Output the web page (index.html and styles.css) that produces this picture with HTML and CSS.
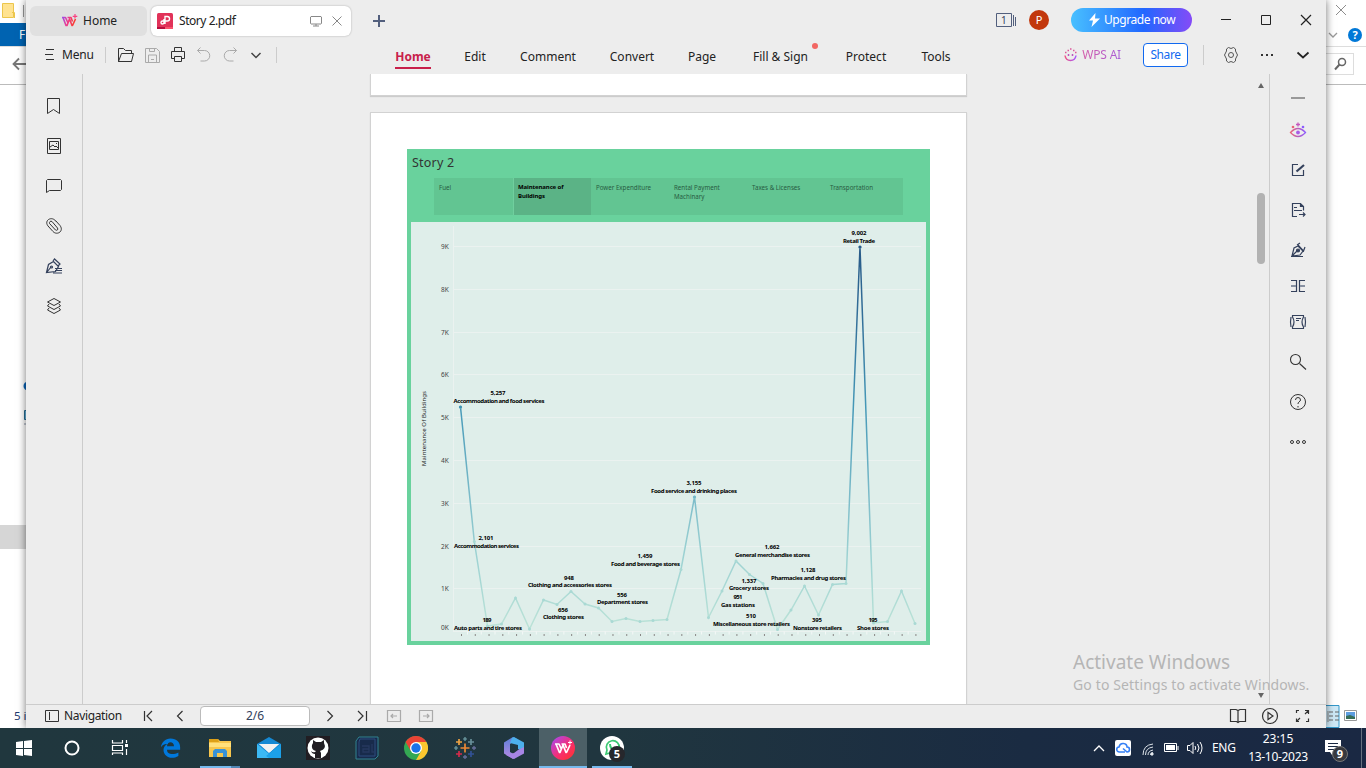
FILE: index.html
```html
<!DOCTYPE html>
<html lang="en">
<head>
<meta charset="utf-8">
<title>Story 2.pdf</title>
<link rel="stylesheet" href="styles.css">
</head>
<body>
<div class="desktop">
  <section class="explorer">
    <div class="ex-title">
      <svg width="24" height="23" fill="none"><path d="M2.500 3.500h11v14h-11z" fill="#ffe391" stroke="#ecc64c"/><path d="M12 12.500h2.500v5.500" stroke="#ecc64c"/><path d="M23.500 5v12" stroke="#999"/></svg>
      <svg width="50" height="23" fill="none" stroke="#8d8d8d"><path d="M20 5l10 10M30 5L20 15"/></svg>
    </div>
    <div class="ex-ribbon"><span class="ex-file">File</span><span class="ex-help"><svg width="14" height="22" fill="none" stroke="#999" stroke-width="1.300"><path d="M3 9l4 4 4-4"/></svg><b>?</b></span></div>
    <div class="ex-address">
      <svg width="30" height="37" fill="none" stroke="#777" stroke-width="1.800"><path d="M13.500 17H28M19 11.500l-5.500 5.500L19 22.500"/></svg>
      <div class="ex-search"><svg width="20" height="20" fill="none" stroke="#666" stroke-width="1.500"><circle cx="12" cy="8" r="3.500"/><path d="M9.500 10.500L5 15.500" stroke-width="2"/></svg></div>
    </div>
    <div class="ex-list">
      <svg width="26" height="619"><circle cx="28" cy="301" r="4.500" fill="#0a64b8"/><path d="M24.500 325.500h4v9h-4z" fill="#69b5df" stroke="#286f94"/><path d="M24 339h3" stroke="#8794a8"/><path d="M0 440h26v24H0z" fill="#d6d6d6"/></svg>
    </div>
    <div class="ex-status"><span>5 items</span><svg width="40" height="24"><path d="M-10 1.500h23v22h-23z" fill="#cde8f6" stroke="#3297c9"/><path d="M2 7v11" stroke="#888"/><path d="M3 8h10M3 12h10M3 16h10" stroke="#666" stroke-dasharray="4 2"/><path d="M18.500 6.500h12v10h-12z" fill="#fff" stroke="#999"/><path d="M20 8h9v7h-9z" fill="#5c9de0"/><path d="M20 12l4-1 5 2v2h-9z" fill="#376e58"/></svg></div>
  </section>

  <main class="wps">
    <header class="tabbar">
      <div class="tab home-tab"><svg width="17" height="16" viewBox="0 0 17 16" fill="none"><defs><linearGradient id="w" gradientUnits="userSpaceOnUse" x1="1" y1="0" x2="15" y2="4"><stop stop-color="#8651ff"/><stop offset=".5" stop-color="#ee3b91"/><stop offset="1" stop-color="#fa3c30"/></linearGradient></defs><path d="M1 4.500h3.500L7 10M2 4.500L5 12.500h1L8.500 6l2.500 6.500h.500L14.500 6M6.500 4.500H10l1.500 4" stroke="url(#w)" stroke-width="1.600" stroke-linejoin="round"/><path d="M14 1v4.500M11.700 3.300h4.600" stroke="#f84383" stroke-width="1.200"/></svg><span>Home</span></div>
      <div class="tab doc-tab"><svg width="16" height="16" fill="none"><rect width="16" height="16" rx="1.500" fill="#e13259"/><path d="M0 14h8v2H0z" fill="#b60d3d"/><path d="M8 14h8v2H8z" fill="#fa536c"/><path d="M8 11V3.500h2.300a2.200 2.200 0 0 1 0 4.500H5.500a1.500 1.500 0 1 0 1.500 1.500V6" stroke="#fff" stroke-width="1.400"/></svg><span class="t-doc">Story 2.pdf</span><svg class="screen-ic" width="12" height="11" fill="none" stroke="#888"><path d="M1 .500h10l.500.500v6.500l-.500.500H1L.500 7.500V1zM3 10h6M6 8v2"/></svg><svg width="10" height="10" fill="none" stroke="#888"><path d="M.500.500l9 9M9.500.500l-9 9"/></svg></div>
      <svg class="plus" width="24" height="24" stroke="#525f7d" stroke-width="2"><path d="M12 6v12M6 12h12"/></svg>
      <div class="win-tools">
        <svg class="count" width="21" height="14" fill="none" stroke="#525f7d"><path d="M.500.500h15v13H.500zM17.500 2v11M19.500 4v9"/><text x="5" y="11" class="count-text">1</text></svg>
        <span class="avatar">P</span>
        <span class="upgrade"><svg width="12" height="14"><path d="M7.500 0L1 7.500h4L3.500 14 12 5.500H7z" fill="#fff"/></svg><span class="t-up">Upgrade now</span></span>
        <svg width="40" height="40" fill="none" stroke="#222"><path d="M15 19.500h10"/></svg><svg width="40" height="40" fill="none" stroke="#222"><path d="M15.500 15.500h9v9h-9z"/></svg><svg width="40" height="40" fill="none" stroke="#222" stroke-width="1.200"><path d="M15 15l10 10M25 15L15 25"/></svg>
      </div>
    </header>

    <div class="toolbar">
      <svg width="10" height="12" stroke="#333"><path d="M1 .500h8M0 5.500h8M1 10.500h8"/></svg><span class="t-menu">Menu</span><i class="sep"></i>
      <div class="quick">
        <svg viewBox="0 0 26 26" stroke="#333"><path d="M5.500 19.500v-13h5l2 2h6v3M5.500 19.500l3-8h12l-2 8zM5.500 19.500h13"/></svg>
        <svg viewBox="0 0 26 26" stroke="#aaa"><path d="M6.500 6.500h11l3 3v11h-14zM9.500 20v-7h8v7M10.500 6.500v3h5v-3M12 17.500h3"/></svg>
        <svg viewBox="0 0 26 26" stroke="#333"><path d="M9.500 9.500v-4h7v4M9.500 16.500h-3v-7h13v7h-3M9.500 14.500h7v5h-7z"/></svg>
        <svg viewBox="0 0 26 26" stroke="#aaa"><path d="M9.500 5.500L6.500 8.500l3 3M6.500 8.500h7a5 5 0 0 1 0 10.500h-4"/></svg>
        <svg viewBox="0 0 26 26" stroke="#aaa"><path d="M16.500 5.500l3 3-3 3M19.500 8.500h-7a5 5 0 0 0 0 10.500h4"/></svg>
        <svg viewBox="0 0 26 26" stroke="#444" stroke-width="1.500"><path d="M8.500 11l4.500 4.500 4.500-4.500"/></svg>
      </div><i class="sep"></i>
      <nav class="menu"><b>Home</b><span>Edit</span><span>Comment</span><span>Convert</span><span>Page</span><span class="new">Fill &amp; Sign</span><span>Protect</span><span>Tools</span></nav>
      <div class="tool-right">
        <svg width="13" height="14" fill="none" stroke-width="1.500"><defs><linearGradient id="ai"><stop stop-color="#ef5583"/><stop offset="1" stop-color="#a658ff"/></linearGradient></defs><path d="M1 7.500c1 6.500 10 6.500 11 0" stroke="url(#ai)"/><path d="M1 4.500h1.500M3.500 2.500H5M6 1h1.500M9 2.500h1.500M11 4.500h1.500" stroke="#dc579a"/><path d="M4.500 6v2M8.500 6v2" stroke="#ba55bd"/></svg><span class="wps-ai">WPS AI</span><span class="share">Share</span><i class="sep"></i>
        <svg class="r-ic" viewBox="0 0 36 30" stroke="#555"><path d="M13.500 9l2-1.500 2.500 1 2.500-1 2 1.500v2l2 4-2 4v2l-2 1.500-2.500-1-2.500 1-2-1.500v-2l-2-4 2-4z"/><circle cx="18" cy="15" r="2.500"/></svg><svg class="r-ic" viewBox="0 0 36 30"><path d="M12 14h2v2h-2zM17 14h2v2h-2zM22 14h2v2h-2z" fill="#333"/></svg><svg class="r-ic" viewBox="0 0 36 30" stroke="#222" stroke-width="1.700"><path d="M12.500 12.500l5.500 5 5.500-5"/></svg>
      </div>
    </div>

    <div class="body">
      <aside class="left-rail">
        <svg viewBox="0 0 20 20"><path d="M3.500 2.500h12v15l-6-4-6 4z"/></svg>
        <svg viewBox="0 0 20 20"><path d="M3.500 2.500h13v15h-13zM5.500 5.500h9v8h-9zM6 11l3-2 2 2 1-1 2 2"/><path d="M12 7.500h1"/></svg>
        <svg viewBox="0 0 20 20"><path d="M2.500 16.500v-12l1-1h13l1 1v9l-1 1H5.500z"/></svg>
        <svg viewBox="0 0 20 20"><path d="M12 5.500C10 2.500 7 2 4.500 3.500 2 5.500 2.500 8 4 10l5 5.500c2 2.200 5 2.200 7 .500 2-2 1.500-4.500 0-6.500l-4.500-5M5.500 7.500l6 6.500c1.500 1 3-.500 2-2L8 5.500M5.500 7.500C5 6 6.500 4.500 8 5.500"/></svg>
        <svg viewBox="0 0 20 20" class="navy"><path d="M2.500 16.500l2-8 5-3 5 5-3 5zM9 5l1.500-2 5.500 5-2 2M3 16l4-5M11 12.500h7M11 14.500h7M9 17h9"/><circle cx="7.500" cy="11" r="1"/></svg>
        <svg viewBox="0 0 20 20"><path d="M10 2.500L16.500 6 10 9.500 3.500 6zM5 8l-1.500 2L10 13.500 16.500 10 15 8M5 12l-1.500 2L10 17.500 16.500 14 15 12"/></svg>
      </aside>
      <section class="canvas">
        <div class="pages">
          <article class="page page-prev"></article>
          <article class="page">
            <div class="story">
              <h1>Story 2</h1>
              <div class="points"><span>Fuel</span><b>Maintenance of<br>Buildings</b><span>Power Expenditure</span><span>Rental Payment<br>Machinary</span><span>Taxes &amp; Licenses</span><span>Transportation</span></div>
              <svg class="chart" viewBox="411 222 515 419" width="515" height="419">
                <defs><linearGradient id="depth" gradientUnits="userSpaceOnUse" x1="0" y1="247" x2="0" y2="630"><stop stop-color="#285a88"/><stop offset=".2" stop-color="#34719b"/><stop offset=".42" stop-color="#4699b8"/><stop offset=".65" stop-color="#7bbbc9"/><stop offset=".8" stop-color="#9bd1d2"/><stop offset="1" stop-color="#bce3d7"/></linearGradient>
                <marker id="dot" markerWidth="4" markerHeight="4" refX="2" refY="2" markerUnits="userSpaceOnUse"><circle cx="2" cy="2" r="1.500" fill="#a9d9d4"/></marker></defs>
                <path class="grid" d="M454 246.500h467M454 289.500h467M454 332.500h467M454 374.500h467M454 417.500h467M454 460.500h467M454 503.500h467M454 546.500h467M454 588.500h467M453.500 226v406M454 631.500h467"/>
                <path class="ticks" d="M467 633h454"/><path class="marks" d="M461 635h456"/>
                <g class="axis"><text x="441" y="249">9K</text><text x="441" y="292">8K</text><text x="441" y="335">7K</text><text x="441" y="377">6K</text><text x="441" y="420">5K</text><text x="441" y="463">4K</text><text x="441" y="506">3K</text><text x="441" y="549">2K</text><text x="441" y="591">1K</text><text x="441" y="630">0K</text></g>
                <text class="axis-title" transform="translate(426 466) rotate(-90)" textLength="75">Maintenance Of Buildings</text>
                <polyline class="line" points="460.500,407 474.300,541.500 487.500,626 501.500,624 515.500,598 529.500,629 543.500,600 557,604.500 571,591.500 585,604 598.500,608 612,621.500 626,618.500 640,621.500 653,620.500 667,619.500 681,569.500 694.500,497 708.500,617.500 722,591 736,561 749.500,574.500 763,583.500 777.500,629.500 791,610 804.500,586 818.500,615 832.500,584.500 846,583.500 860,247 873.500,623 887.500,621.500 901.500,591 915,623.500"/>
                <circle cx="460.500" cy="407" r="1.600" fill="#3e92b4"/><circle cx="860" cy="247" r="1.600" fill="#285a88"/><circle cx="694.500" cy="497" r="1.600" fill="#72b8c8"/>
                <g class="labels">
                  <text x="498" y="395" textLength="15">5,257</text><text x="499" y="403" textLength="91">Accommodation and food services</text>
                  <text x="486" y="540" textLength="15">2,101</text><text x="486.500" y="548" textLength="65">Accommodation services</text>
                  <text x="487" y="622" textLength="9">189</text><text x="488" y="630" textLength="68">Auto parts and tire stores</text>
                  <text x="569" y="580" textLength="10">948</text><text x="570" y="587" textLength="84">Clothing and accessories stores</text>
                  <text x="563" y="612" textLength="10">656</text><text x="563.500" y="619" textLength="41">Clothing stores</text>
                  <text x="622" y="597" textLength="10">556</text><text x="622.500" y="604" textLength="51">Department stores</text>
                  <text x="645" y="558" textLength="15">1,459</text><text x="645.500" y="566" textLength="69">Food and beverage stores</text>
                  <text x="694" y="485" textLength="15">3,155</text><text x="694" y="493" textLength="86">Food service and drinking places</text>
                  <text x="772" y="549" textLength="15">1,662</text><text x="772.500" y="557" textLength="75">General merchandise stores</text>
                  <text x="749" y="583" textLength="15">1,337</text><text x="749" y="590" textLength="40">Grocery stores</text>
                  <text x="738" y="599" textLength="9">951</text><text x="738" y="607" textLength="34">Gas stations</text>
                  <text x="808" y="572" textLength="15">1,128</text><text x="808.500" y="580" textLength="75">Pharmacies and drug stores</text>
                  <text x="751" y="618" textLength="10">510</text><text x="751.500" y="626" textLength="77">Miscellaneous store retailers</text>
                  <text x="817" y="622" textLength="10">395</text><text x="817.500" y="630" textLength="49">Nonstore retailers</text>
                  <text x="873" y="622" textLength="9">195</text><text x="873" y="630" textLength="32">Shoe stores</text>
                  <text x="859" y="235" textLength="15">9,002</text><text x="859" y="243" textLength="32">Retail Trade</text>
                </g>
              </svg>
            </div>
          </article>
        </div>
        <div class="scroll"><svg width="8" height="6"><path d="M4 0l3 5H1z" fill="#666"/></svg><i></i><svg class="down" width="8" height="6"><path d="M4 5l3-5H1z" fill="#666"/></svg></div>
      </section>
      <aside class="right-rail">
        <svg class="dash" viewBox="0 0 20 20"><path d="M3 10h14" stroke="#999" stroke-width="2"/></svg>
        <svg viewBox="0 0 20 20" stroke-width="1.300"><defs><linearGradient id="eye"><stop stop-color="#e96377"/><stop offset="1" stop-color="#8c5bff"/></linearGradient></defs><path d="M2.500 12.500q7.500-8 15 0-7.500 8-15 0z" stroke="url(#eye)"/><circle cx="10" cy="12.500" r="1.900" fill="#a95be5" stroke="none"/><path d="M10 2.500v4M8 4.500h4" stroke="#c557bd"/><circle cx="5" cy="7" r="1.300" fill="#e96377" stroke="none"/><circle cx="15" cy="7" r="1.300" fill="#8c5bff" stroke="none"/></svg>
        <svg viewBox="0 0 20 20" class="navy"><path d="M10 4.500H4.500v11h11V10"/><path d="M8.500 11.500l7.500-6.500" stroke-width="2.200"/></svg>
        <svg viewBox="0 0 20 20" class="navy"><path d="M9 16.500H4.500v-13h8l3 3v4M12.500 3.500v3h3M6 7.500h3M6 10.500h8M11 14.500h6M15 12.500l2 2-2 2"/></svg>
        <svg viewBox="0 0 20 20" class="navy"><path d="M4 16l2-8 4-2 5 5-3 4zM4 16l5-5M9 5l3-2M10 5l5.500 6 1.500-4M3 16.500h12"/><circle cx="10" cy="10.500" r="1.500" fill="#34415c"/></svg>
        <svg viewBox="0 0 20 20" class="navy"><path d="M3 4.500h5.500v11H3M17 4.500h-5.500v11H17"/><path d="M3 10h5M12 10h5" stroke="#8790a1" stroke-width="2"/></svg>
        <svg viewBox="0 0 20 20" class="navy"><path d="M4 3.500h12M4 16.500h12M4.500 3.500v1.500q3 5 0 10v1.500M15.500 3.500v1.500q-3 5 0 10v1.500M8 6.500h5M8 8.500h3M3 5q-1 5 0 10M17 5q1 5 0 10"/></svg>
        <svg viewBox="0 0 20 20" stroke-width="1.100"><circle cx="7.500" cy="7.500" r="5"/><path d="M11.500 11.500l6.500 6"/></svg>
        <svg viewBox="0 0 20 20"><circle cx="10" cy="10" r="7.500"/><path d="M7.500 8q0-2.500 2.500-2.500T12.500 8q0 1-1.500 2-1 .5-1 2M10 14v1.500"/></svg>
        <svg viewBox="0 0 20 20"><circle cx="4" cy="10" r="1.500"/><circle cx="10" cy="10" r="1.500"/><circle cx="16" cy="10" r="1.500"/></svg>
      </aside>
    </div>

    <footer class="status">
      <svg width="14" height="12" fill="none" stroke="#333"><path d="M.500.500h13v11H.500zM4.500 2v8"/></svg><span class="t-nav">Navigation</span>
      <svg class="pg" viewBox="0 0 32 22"><path d="M12.500 6v10M20 6l-5 5 5 5"/></svg><svg class="pg" viewBox="0 0 32 22"><path d="M18.500 6l-5 5 5 5"/></svg>
      <span class="page-no">2/6</span>
      <svg class="pg next" viewBox="0 0 32 22"><path d="M13.500 6l5 5-5 5"/></svg><svg class="pg" viewBox="0 0 32 22"><path d="M12 6l5 5-5 5M20.500 6v10"/></svg><svg class="pg dim" viewBox="0 0 32 22"><path d="M9.500 5.500h13v11h-13zM13 11h6M15 9l-2 2 2 2"/></svg><svg class="pg dim" viewBox="0 0 32 22"><path d="M9.500 5.500h13v11h-13zM13 11h6M17 9l2 2-2 2"/></svg>
      <div class="views"><svg class="pg" viewBox="0 0 32 22"><path d="M8.500 4.500H14l2 1 2-1h5.500v12h-6l-1.500 1-1.500-1h-6zM16 5v12"/></svg><svg class="pg" viewBox="0 0 32 22"><circle cx="16" cy="11" r="7.500"/><path d="M14 7.500v7l5-3.500z"/></svg><svg class="pg" viewBox="0 0 32 22"><path d="M10.500 8V5.500H13M19 5.500h3.500V9M22.500 13.500v3H20M13 16.500h-2.500v-3M19 9l3-3M11 16l3-3"/></svg></div>
    </footer>
  </main>
  <div class="activate"><p>Activate Windows</p><span>Go to Settings to activate Windows.</span></div>
</div>

<footer class="taskbar">
  <div class="apps">
    <div class="app sys"><svg viewBox="0 0 24 24"><path d="M4 6l7-1v7H4zM12 5l8-1v8h-8zM4 13h7v7l-7-1zM12 13h8v7l-8-1z" fill="#fff"/></svg></div>
    <div class="app sys"><svg viewBox="0 0 24 24"><circle cx="12" cy="12" r="6.500" fill="none" stroke="#fff" stroke-width="2"/></svg></div>
    <div class="app sys"><svg viewBox="0 0 24 24" fill="none" stroke="#fff" stroke-width="1.200"><path d="M4.500 4v3h10V4M4.500 19v-2h10v2M4.500 9.500h10v5h-10zM18.500 4v3M18.500 13v6"/><path d="M17 8h3v3h-3z" fill="#fff" stroke="none"/></svg></div>
    <div class="app edge"><svg viewBox="0 0 24 24"><path d="M1 11C2 5 6 1 12 1c7 0 11 4 11 10v3H8c0 6 8 6 13 3v4C13 26 4 22 4 14c0-3 2-6 5-7-3 0-6 1-8 4zm7-1h8c0-6-8-6-8 0z" fill="#0078dc"/></svg></div>
    <div class="app open folder"><svg viewBox="0 0 24 24"><path d="M1 3h9l2 2h11v16H1z" fill="#f7c64d"/><path d="M1 3h9l1 3H1z" fill="#dda017"/><path d="M1 7h22v4H1z" fill="#ffe07c"/><path d="M5 21v-6l2-2h10l2 2v6h-4v-4H9v4z" fill="#3992d6"/></svg></div>
    <div class="app"><svg viewBox="0 0 24 24"><path d="M0 8l12-7 12 7v14H0z" fill="#1589d4"/><path d="M2 8h20L12 17z" fill="#f4f5f5"/><path d="M0 8l17 14H0z" fill="#3cb9f4"/><path d="M24 8L9 20l3 2h12z" fill="#1ca0e8"/><path d="M2 8h20l-9 8z" fill="#f2f2f2"/></svg></div>
    <div class="app"><svg viewBox="0 0 24 24"><path d="M0 0h24v24H0z" fill="#211d22"/><circle cx="12" cy="12" r="10.500" fill="#fff"/><path d="M9 22v-4q-3 0-4-3 2 2 4 1l1-1q-5-1-4-6l1-2V4l3 2h5l3-2v3q3 6-4 8l1 2v5z" fill="#211d22"/></svg></div>
    <div class="app"><svg viewBox="0 0 24 24" fill="none"><path d="M4 1h19v19l-3 3H1V5z" fill="#182b4b" stroke="#318391"/><path d="M5 3h15v17H4V6z" stroke="#2c4c7e"/><path d="M7 10h7v6H8v-3h6M17 8v8h2" stroke="#26395f" stroke-width="1.300"/></svg></div>
    <div class="app"><svg viewBox="0 0 24 24"><circle cx="12" cy="12" r="12" fill="#34a853"/><path d="M1.600 6A12 12 0 0 1 22.400 6H12l-5.200 9z" fill="#ea4335"/><path d="M22.400 6A12 12 0 0 1 12 24l5.200-9L12 6z" fill="#fbc62f"/><circle cx="12" cy="12" r="6" fill="#fff"/><circle cx="12" cy="12" r="4.700" fill="#1a73e8"/></svg></div>
    <div class="app"><svg viewBox="0 0 24 24" fill="none" stroke-width="1.700"><path d="M12 7.500v9M7.500 12h9" stroke="#ed8734"/><path d="M6 3v6M3 6h6" stroke="#eda244"/><path d="M18 3v6M15 6h6" stroke="#688f99"/><path d="M6 15v6M3 18h6" stroke="#d42b4b"/><path d="M18 15v6M15 18h6" stroke="#325195"/><path d="M12 1v4M10 3h4M1 12h4M3 10v4" stroke="#72a2a9" stroke-width="1.200"/><path d="M12 19v4M10 21h4M19 12h4M21 10v4" stroke="#686f9c" stroke-width="1.300"/></svg></div>
    <div class="app"><svg viewBox="0 0 24 24"><defs><linearGradient id="m" x2="0" y2="1"><stop stop-color="#5b7fd8"/><stop offset="1" stop-color="#b98be5"/></linearGradient></defs><path d="M11 1L2 6.500v11L11 23l4-3-7-4V8l7-5z" fill="url(#m)"/><path d="M10 2l2-1 10 5.500V16l-6-3V9L8 7z" fill="#4db0ec"/><path d="M22 11v6.500L12 23l-8-4 8-2 4-3z" fill="#a785e5"/></svg></div>
    <div class="app open active"><svg viewBox="0 0 24 24" fill="none"><defs><linearGradient id="wp" x2="1" y2="1"><stop stop-color="#a14bff"/><stop offset=".55" stop-color="#f72e72"/><stop offset="1" stop-color="#ff3325"/></linearGradient></defs><circle cx="12" cy="12" r="12" fill="url(#wp)"/><path d="M4 8h4l2.500 5.500M5 8l3.500 8.500h.500L12 9l3 7.500h.500L19 9M10.500 8H14l1.500 4" stroke="#fff" stroke-width="1.700" stroke-linejoin="round"/><path d="M19 4.500v4M17 6.500h4" stroke="#fff"/></svg></div>
    <div class="app open whatsapp"><svg viewBox="0 0 24 24" fill="none"><circle cx="12" cy="12" r="12" fill="#fff"/><path d="M6 18l1-4a6.500 6.500 0 1 1 3 3z" stroke="#3cc873" stroke-width="1.700"/><path d="M10 8q0 5 5 6" stroke="#3cc873" stroke-width="2"/></svg><b class="badge">5</b></div>
  </div>
  <div class="tray">
    <svg width="16" height="16" fill="none" stroke="#fff" stroke-width="1.300"><path d="M3 11l5-5 5 5"/></svg>
    <svg class="cloud" width="16" height="16" fill="none"><rect width="16" height="16" rx="2" fill="#fff"/><path d="M10 12H4.500a2.500 2.500 0 0 1-.5-5q1-4 4.500-3.500Q12 4 12 7a2.500 2.500 0 0 1 0 5L8 8.500" stroke="#3580f5" stroke-width="1.600"/></svg>
    <svg class="wifi" width="16" height="16" fill="none" stroke="#dce2e8"><path d="M3 15q0-10 10-11M5.500 15q0-7 7.500-8M8 15q0-4 5-5M10.500 15q0-2 2.500-2.500"/><circle cx="12" cy="14" r="1.200" fill="#fff"/></svg>
    <svg class="battery" width="15" height="10" fill="none" stroke="#fff"><path d="M.500.500h12v8H.500zM14 3v4"/><path d="M2 2h9v5H2z" fill="#fff" stroke="none"/></svg>
    <svg class="sound" width="18" height="16" fill="none" stroke="#fff"><path d="M1.500 5.500H4l3-3v11l-3-3H1.500zM9 6q1.500 2 0 4M11.500 4q3 4 0 8M14 2q4 6 0 12"/></svg>
    <span class="lang">ENG</span>
    <span class="clock"><span>23:15</span><span class="date">13-10-2023</span></span>
    <span class="notice"><svg width="18" height="18"><path d="M1 1h16v12h-6l-3 3-2-3H1z" fill="#fff"/><path d="M4 4.500h10M4 7.500h10M4 10.500h6" stroke="#1b2a43"/></svg><b class="badge">9</b></span>
    <i></i>
  </div>
</footer>
</body>
</html>
```
FILE: styles.css
```css
* { box-sizing: border-box; }
body { margin: 0; width: 1366px; height: 768px; overflow: hidden; font: 12px/16px "Noto Sans", sans-serif; color: #222; }
svg { display: block; flex: none; overflow: hidden; }
span, b { white-space: nowrap; }
.desktop { position: relative; height: 728px; overflow: hidden; background: #fff; }

/* Explorer window, mostly hidden behind the reader */
.explorer { height: 728px; display: flex; flex-direction: column; }
.ex-title { height: 23px; display: flex; justify-content: space-between; }
.ex-ribbon { height: 24px; display: flex; justify-content: space-between; border-bottom: 1px solid #ddd; }
.ex-file { width: 60px; height: 23px; padding: 4px 0 0 19px; background: #0063b1; color: #fff; }
.ex-help { display: flex; align-items: center; gap: 8px; padding-right: 4px; }
.ex-help b { width: 14px; height: 14px; border-radius: 50%; background: #0078d7; color: #fff; font-size: 11px; line-height: 14px; text-align: center; }
.ex-address { height: 38px; display: flex; justify-content: space-between; border-bottom: 1px solid #bbb; }
.ex-search { width: 120px; height: 22px; margin: 6px 12px 0 0; border: 1px solid #ddd; display: flex; justify-content: flex-end; padding-right: 3px; }
.ex-list { flex: 1; }
.ex-status { height: 24px; display: flex; justify-content: space-between; align-items: center; padding-left: 14px; color: #1e3a70; font-size: 11.500px; }

/* PDF reader window */
.wps { position: absolute; left: 26px; top: 0; width: 1300px; height: 728px; display: flex; flex-direction: column; background: #ededed; box-shadow: 0 0 8px rgba(0,0,0,.55); }
.tabbar { height: 40px; display: flex; align-items: center; padding-left: 4px; }
.tab { height: 30px; margin-top: 2px; border-radius: 6px; display: flex; align-items: center; }
.home-tab { width: 117px; padding-left: 31px; background: #e0e0e0; gap: 5px; }
.doc-tab { width: 200px; margin-left: 4px; padding: 0 9px 0 6px; background: #fff; box-shadow: 0 0 2px rgba(0,0,0,.3); }
.t-doc { margin-left: 6px; letter-spacing: -.45px; }
.screen-ic { margin: 0 10px 0 auto; }
.plus { margin: 1px 0 0 16px; }
.win-tools { margin-left: auto; display: flex; align-items: center; }
.count { margin-right: 12px; }
.count-text { font: 10px "Noto Sans", sans-serif; fill: #34415c; stroke: none; }
.avatar { width: 20px; height: 20px; margin-right: 22px; border-radius: 50%; background: #c2370c; color: #fff; font-size: 11px; line-height: 20px; text-align: center; }
.upgrade { width: 121px; height: 24px; margin-right: 14px; padding-left: 17px; display: flex; align-items: center; gap: 4px; border-radius: 12px; background: linear-gradient(90deg, #48c0ff, #2167ff 60%, #854bf7); color: #fff; }
.t-up { letter-spacing: -.45px; }

.toolbar { height: 34px; padding: 0 5px 4px 19px; display: flex; align-items: center; }
.t-menu { margin-left: 7px; width: 31px; letter-spacing: -.2px; }
.sep { flex: none; width: 1px; height: 16px; background: #ccc; margin-left: 12px; }
.quick { display: flex; margin-left: 7px; }
.quick svg { width: 26px; height: 26px; fill: none; }
.quick + .sep { margin-left: 7px; }
.menu { margin-left: 105px; padding-top: 7px; display: grid; grid-template-columns: 62px 62px 84px 84px 56px 102px 68px 72px; text-align: center; }
.menu b { justify-self: center; color: #c8204b; height: 20px; border-bottom: 2px solid #c8204b; }
.menu span { justify-self: center; position: relative; }
.menu .new { padding-right: 1px; }
.new::after { content: ""; position: absolute; right: -9px; top: -6px; width: 6px; height: 6px; border-radius: 50%; background: #f26763; }
.tool-right { margin-left: auto; display: flex; align-items: center; }
.wps-ai { margin-left: 5px; letter-spacing: -.2px; background: linear-gradient(90deg, #d45aa8, #a75cd8); -webkit-background-clip: text; background-clip: text; color: transparent; }
.share { width: 45px; height: 24px; margin-left: 22px; border: 1px solid #1169f0; border-radius: 4px; background: #fff; color: #1169f0; line-height: 22px; text-align: center; letter-spacing: -.4px; }
.share + .sep { height: 20px; margin: 0 9px 0 15px; }
.r-ic { width: 36px; height: 30px; fill: none; }

.body { flex: 1; min-height: 0; display: flex; }
.left-rail { width: 57px; border-right: 1px solid #ccc; padding: 22px 0 0 18px; display: flex; flex-direction: column; gap: 20px; }
.left-rail svg, .right-rail svg { width: 20px; height: 20px; fill: none; stroke: #333; }
.left-rail .navy, .right-rail .navy { stroke: #34415c; stroke-width: 1.200; }
.canvas { flex: 1; display: flex; overflow: hidden; padding-left: 287px; }
.pages { width: 598px; flex: none; display: flex; flex-direction: column; gap: 16px; }
.page { flex: none; width: 597px; height: 700px; padding: 36px; background: #fff; border: 1px solid #d2d2d2; box-shadow: 0 1px 1px #ccc; }
.page-prev { height: 22px; padding: 0; border-top: 0; }
.scroll { margin-left: auto; width: 12px; padding: 9px 2px 0; margin-right: 2px; }
.scroll i { display: block; width: 8px; height: 71px; margin: 104px 0 0 0; border-radius: 4px; background: #b2b2b2; }
.scroll .down { margin-top: 429px; }
.right-rail { width: 57px; border-left: 1px solid #ccc; padding: 14px 0 0 18px; display: flex; flex-direction: column; gap: 20px; }
.right-rail .dash { margin-bottom: -8px; }
.right-rail svg:nth-child(6), .right-rail svg:nth-child(7) { margin-top: -4px; }

/* Report */
.story { width: 523px; height: 496px; background: #69d29d; padding: 5px 4px 0; display: flex; flex-direction: column; }
.story h1 { margin: 0 0 6px 1px; font: 12.500px/18px "Noto Sans", sans-serif; letter-spacing: .2px; color: #333; }
.points { width: 469px; height: 37px; margin: 0 0 7px 23px; display: grid; grid-template-columns: 79px repeat(5, 78px); background: #62c592; font-size: 6.200px; line-height: 9px; color: #285c42; }
.points span, .points b { padding: 5px 0 0 5px; }
.points b { padding-left: 4px; letter-spacing: -.1px; background: #5bb386; color: #000; border-left: 1px solid #70cf9e; font-size: 6px; }
.chart { background: #dfeeea; font: 6px "Noto Sans", sans-serif; }
.grid { fill: none; stroke: #ebf2f0; }
.line { fill: none; stroke: url(#depth); stroke-width: 1.500; marker-start: url(#dot); marker-mid: url(#dot); marker-end: url(#dot); }
.ticks { stroke: #f4f8f7; stroke-width: 3; stroke-dasharray: 1 12.770; }
.marks { stroke: #6c6464; stroke-width: 1.500; stroke-dasharray: 1 12.770; }
.axis { fill: #444; font-size: 6.500px; }
.axis-title { fill: #222; }
.labels { font-weight: 700; fill: #000; text-anchor: middle; }

.status { height: 24px; border-top: 1px solid #ccc; display: flex; align-items: center; padding: 0 8px 2px 19px; }
.t-nav { margin: 0 11px 0 5px; width: 57px; letter-spacing: -.35px; }
.pg { width: 32px; height: 22px; fill: none; stroke: #333; stroke-width: 1.200; }
.page-no { width: 110px; height: 20px; margin-left: 4px; border: 1px solid #bbb; border-radius: 4px; background: #fff; text-align: center; line-height: 18px; color: #34415c; }
.next { margin-left: 4px; }
.dim { stroke: #aaa; }
.views { margin-left: auto; display: flex; }

.activate { position: absolute; left: 1073px; top: 650px; color: #b5b5b5; }
.activate p { margin: 0; font-size: 19px; line-height: 24px; }
.activate span { display: block; font-size: 14px; line-height: 22px; letter-spacing: .13px; }

/* Taskbar */
.taskbar { height: 40px; display: flex; justify-content: space-between; background: linear-gradient(90deg, #20373e, #20363f 45%, #1a2b42 75%, #1a2843); color: #fff; }
.apps { display: flex; }
.app { position: relative; width: 49px; height: 40px; display: flex; align-items: center; justify-content: center; }
.app svg { width: 24px; height: 24px; }
.sys { width: 48px; }
.edge { margin-left: 2px; }
.edge svg { width: 21px; }
.open::after { content: ""; position: absolute; left: 5px; bottom: 0; width: 40px; height: 2px; background: #76b9ed; }
.folder::after { background: linear-gradient(90deg, #76b9ed 31px, #5286b4 31px); }
.active { width: 48px; margin-left: 1px; background: #4c6067; }
.active::after { left: 0; width: 48px; }
.badge { position: absolute; width: 16px; height: 16px; border-radius: 50%; background: #26272c; color: #fff; font-size: 11px; line-height: 16px; text-align: center; }
.whatsapp .badge { left: 22px; top: 18px; }
.tray { display: flex; align-items: center; }
.cloud { margin-left: 8px; }
.wifi { margin-left: 9px; }
.battery { margin-left: 8px; }
.sound { margin-left: 7px; }
.lang { margin-left: 8px; width: 25px; letter-spacing: -.3px; }
.clock { width: 70px; margin-left: 5px; padding-left: 2px; text-align: center; display: flex; flex-direction: column; line-height: 18px; }
.date { letter-spacing: -.3px; }
.notice { position: relative; margin-left: 12px; width: 18px; height: 18px; margin-right: 19px; }
.notice .badge { left: 8px; top: 7px; border: 1px solid #777; line-height: 14px; background: #37393f; }
.tray i { width: 1px; height: 40px; margin-right: 4px; background: #66717f; }
```
